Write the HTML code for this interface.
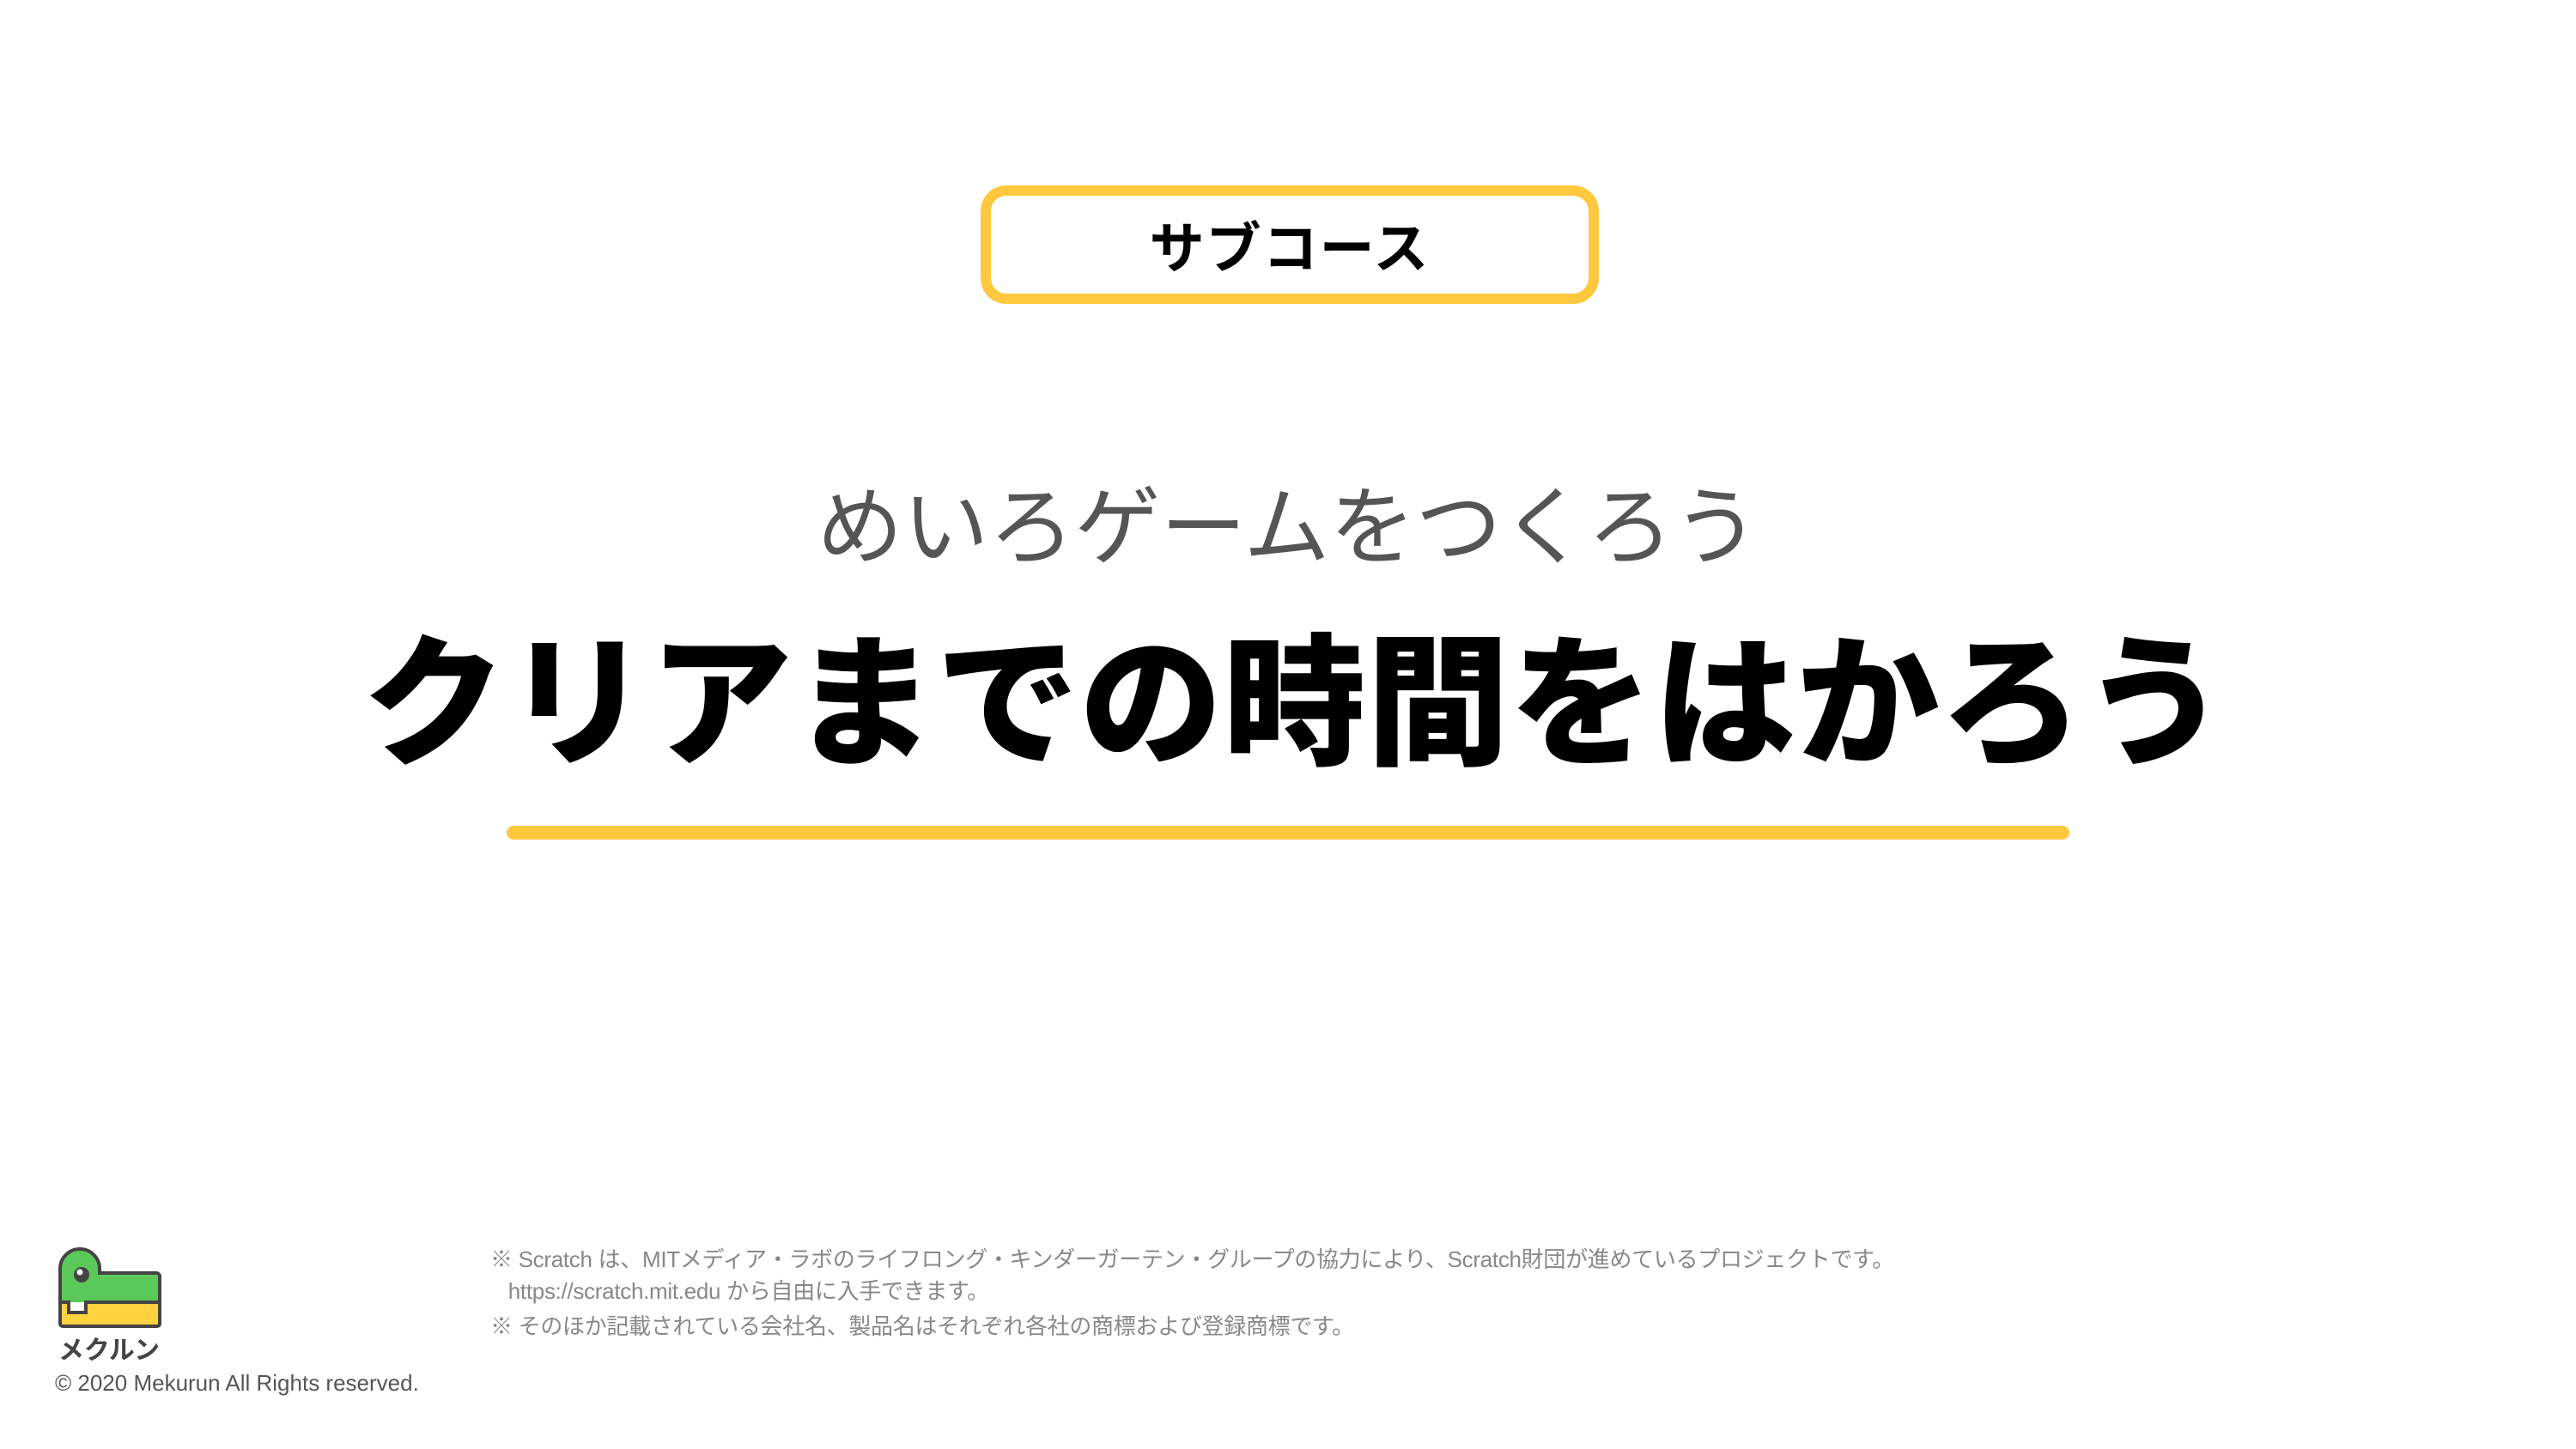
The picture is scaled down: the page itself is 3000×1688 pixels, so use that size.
<!DOCTYPE html>
<html><head><meta charset="utf-8"><style>
html,body{margin:0;padding:0;background:#fff}
body{width:3000px;height:1688px;position:relative;overflow:hidden;font-family:"Liberation Sans","Noto Sans CJK JP",sans-serif}
.box{position:absolute;left:1142px;top:216px;width:696px;height:114px;border:12px solid #FFC83D;border-radius:30px;display:flex;align-items:center;justify-content:center;font-size:64px;font-weight:bold;color:#000;letter-spacing:2px}
.sub{position:absolute;left:0;width:3000px;top:550px;text-align:center;font-size:100px;color:#555;line-height:130px}
.title{position:absolute;left:8px;width:3000px;top:722px;text-align:center;font-size:166px;font-weight:900;color:#000;line-height:200px;letter-spacing:1px}
.line{position:absolute;left:590px;top:962px;width:1820px;height:16px;border-radius:8px;background:#FFC83D}
.foot{position:absolute;left:571px;font-size:26px;color:#888;line-height:34px;white-space:nowrap;letter-spacing:-0.3px}
.copy{position:absolute;left:64px;top:1596px;font-size:26px;color:#555}
</style></head><body>
<div class="box">サブコース</div>
<div class="sub">めいろゲームをつくろう</div>
<div class="title">クリアまでの時間をはかろう</div>
<div class="line"></div>
<div class="foot" style="top:1450px">※ Scratch は、MITメディア・ラボのライフロング・キンダーガーテン・グループの協力により、Scratch財団が進めているプロジェクトです。</div>
<div class="foot" style="top:1487px">&nbsp;&nbsp;&nbsp;https://scratch.mit.edu から自由に入手できます。</div>
<div class="foot" style="top:1528px">※ そのほか記載されている会社名、製品名はそれぞれ各社の商標および登録商標です。</div>
<svg style="position:absolute;left:0;top:0" width="260" height="1688" viewBox="0 0 260 1688">
<path d="M70 1517 V1478 A22 22 0 0 1 116 1478 V1483 H182 A4 4 0 0 1 186 1487 V1517 Z" fill="#5BC85A"/>
<path d="M70 1517 H80 V1529 H100 V1517 H186 V1542 A3 3 0 0 1 183 1545 H73 A3 3 0 0 1 70 1542 Z" fill="#FFD23F"/>
<path d="M70 1517 V1478 A22 22 0 0 1 116 1478 V1483 H182 A4 4 0 0 1 186 1487 V1542 A3 3 0 0 1 183 1545 H73 A3 3 0 0 1 70 1542 Z" fill="none" stroke="#444" stroke-width="4"/>
<path d="M70 1517 H80 V1529 H100 V1517 H186" fill="none" stroke="#444" stroke-width="4"/>
<circle cx="95" cy="1485" r="9" fill="#444"/><circle cx="93" cy="1482" r="3.5" fill="#fff"/>
<text x="68" y="1583" font-family="Liberation Sans,Noto Sans CJK JP,sans-serif" font-size="30" font-weight="bold" fill="#444" textLength="118" lengthAdjust="spacingAndGlyphs">メクルン</text>
</svg>
<div class="copy">© 2020 Mekurun All Rights reserved.</div>
</body></html>
